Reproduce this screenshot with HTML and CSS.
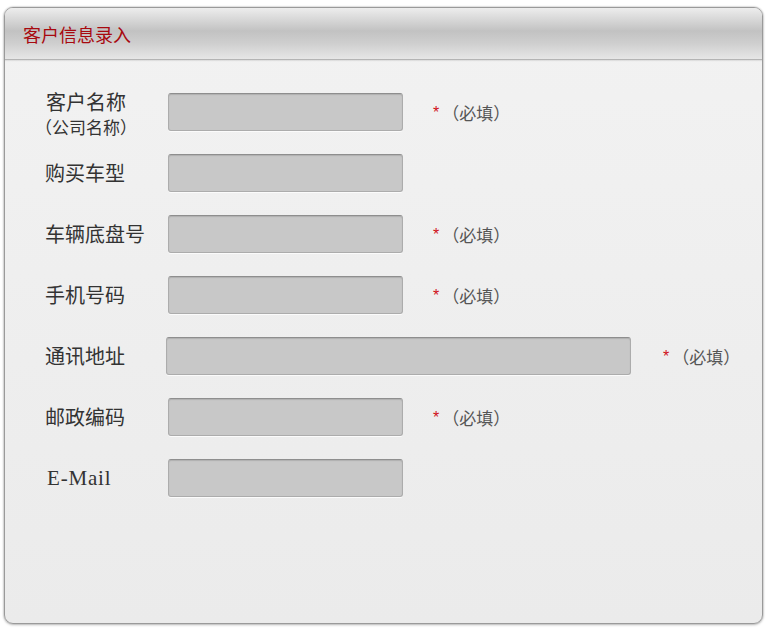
FILE: index.html
```html
<!DOCTYPE html>
<html lang="zh-CN">
<head>
<meta charset="utf-8">
<title>客户信息录入</title>
<link rel="stylesheet" href="styles.css">
</head>
<body>
<div class="panel">
  <div class="panel-head"><span class="panel-title">客户信息录入</span></div>
  <div class="panel-body">
    <div class="row">
      <div class="label"><span class="stack"><span>客户名称</span><span class="sub">（公司名称）</span></span></div>
      <div class="field"></div>
      <div class="req"><span class="star">*</span><span class="note">（必填）</span></div>
    </div>
    <div class="row">
      <div class="label">购买车型</div>
      <div class="field"></div>
    </div>
    <div class="row">
      <div class="label">车辆底盘号</div>
      <div class="field"></div>
      <div class="req"><span class="star">*</span><span class="note">（必填）</span></div>
    </div>
    <div class="row">
      <div class="label">手机号码</div>
      <div class="field"></div>
      <div class="req"><span class="star">*</span><span class="note">（必填）</span></div>
    </div>
    <div class="row">
      <div class="label">通讯地址</div>
      <div class="field field-wide"></div>
      <div class="req req-wide"><span class="star">*</span><span class="note">（必填）</span></div>
    </div>
    <div class="row">
      <div class="label">邮政编码</div>
      <div class="field"></div>
      <div class="req"><span class="star">*</span><span class="note">（必填）</span></div>
    </div>
    <div class="row">
      <div class="label label-latin">E-Mail</div>
      <div class="field"></div>
    </div>
  </div>
</div>
</body>
</html>
```
FILE: styles.css
```css
html, body {
  margin: 0;
  padding: 0;
  background: #ffffff;
}
body {
  padding: 7px 4px 4px 4px;
  font-family: "Noto Sans CJK SC", "Noto Sans", sans-serif;
}
.panel {
  width: 757px;
  height: 615px;
  border: 1px solid #9a9a9a;
  border-radius: 9px;
  box-shadow: 0 0 2px rgba(0,0,0,0.35), 0 1px 3px rgba(0,0,0,0.2);
  background: linear-gradient(#f2f2f2, #ebebeb);
  overflow: hidden;
  display: flex;
  flex-direction: column;
}
.panel-head {
  height: 51px;
  flex: none;
  background: linear-gradient(#ededed 0%, #d8d8d8 22%, #c2c2c2 45%, #cfcfcf 70%, #e6e6e6 100%);
  border-bottom: 1px solid #b4b4b4;
  box-shadow: 0 1px 1px rgba(0,0,0,0.08);
  display: flex;
  align-items: center;
  padding-left: 18px;
}
.panel-title {
  color: #a8090f;
  font-size: 18px;
  line-height: 1;
}
.panel-body {
  padding: 33px 0 0 40px;
  display: flex;
  flex-direction: column;
  gap: 23px;
}
.row {
  display: flex;
  align-items: center;
  height: 38px;
}
.label {
  width: 123px;
  flex: none;
  box-sizing: border-box;
  color: #333333;
  font-size: 20px;
  line-height: 1;
}
.stack {
  display: inline-flex;
  flex-direction: column;
  align-items: center;
  line-height: 25px;
  margin-top: 3px;
  padding-left: 1px;
}
.stack .sub {
  font-size: 17px;
  margin: 0 -12px;
}
.label-latin {
  font-family: "Liberation Serif", "Times New Roman", serif;
  font-size: 21px;
  letter-spacing: 0.8px;
  padding-left: 2px;
}
.field {
  width: 233px;
  height: 36px;
  flex: none;
  background: #c8c8c8;
  border: 1px solid #acacac;
  border-top-color: #8e8e8e;
  border-radius: 3px;
  box-shadow: inset 0 1px 1px rgba(0,0,0,0.12), 0 1px 0 #fbfbfb;
}
.field-wide {
  width: 463px;
  margin-left: -2px;
}
.req {
  margin-left: 30px;
  display: flex;
  align-items: center;
  font-size: 17px;
  color: #555555;
}
.req-wide {
  margin-left: 32px;
}
.star {
  color: #d0101a;
  font-family: "Liberation Sans", sans-serif;
  font-size: 16px;
  margin-top: 1px;
  margin-right: 3px;
}
.note {
  line-height: 1;
}
```
